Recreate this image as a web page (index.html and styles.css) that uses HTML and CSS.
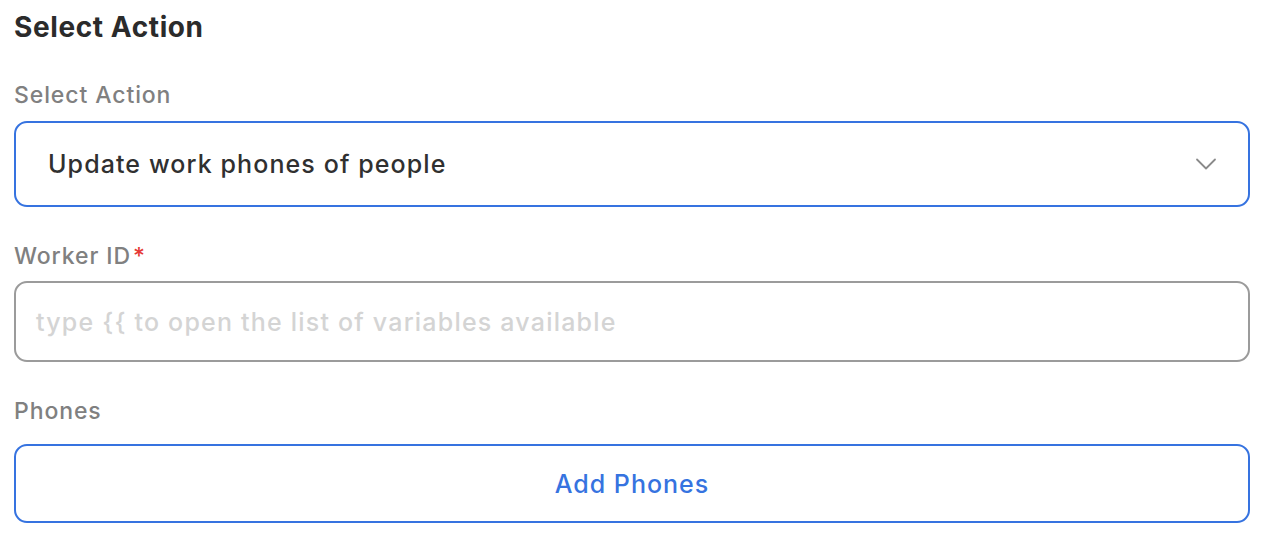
FILE: index.html
```html
<!DOCTYPE html>
<html lang="en">
<head>
<meta charset="utf-8">
<title>Select Action</title>
<link rel="stylesheet" href="styles.css">
</head>
<body>
<main class="panel">
  <h2 class="title">Select Action</h2>

  <label class="label label-first">Select Action</label>
  <div class="select">
    <span class="select-value">Update work phones of people</span>
    <svg class="chevron" width="22" height="12" viewBox="0 0 22 12" aria-hidden="true">
      <path d="M2 1.5 L11 10.5 L20 1.5" fill="none" stroke="#8a8a8a" stroke-width="1.8" stroke-linecap="round" stroke-linejoin="round"/>
    </svg>
  </div>

  <label class="label label-gap">Worker ID<span class="req">*</span></label>
  <div class="input">
    <span class="placeholder">type {{ to open the list of variables available</span>
  </div>

  <label class="label label-gap">Phones</label>
  <button class="add-btn" type="button">Add Phones</button>
</main>
</body>
</html>
```

FILE: styles.css
```css
html, body {
  margin: 0;
  padding: 0;
  background: #ffffff;
}

body {
  font-family: "Inter", "Open Sans", "Liberation Sans", sans-serif;
}

.panel {
  display: flex;
  flex-direction: column;
  padding: 0 20px 0 14px;
}

.title {
  margin: 0;
  font-size: 28px;
  line-height: 54px;
  font-weight: 700;
  letter-spacing: 0.6px;
  color: #2b2b2b;
}

.label {
  display: block;
  font-size: 23px;
  line-height: 32px;
  font-weight: 500;
  letter-spacing: 0.9px;
  color: #808080;
}

.label-first {
  margin-top: 25px;
}

.label-gap {
  margin-top: 33px;
}

.req {
  color: #e53935;
  margin-left: 2px;
}

.select {
  margin-top: 10px;
  height: 86px;
  box-sizing: border-box;
  border: 2px solid #3673e0;
  border-radius: 13px;
  display: flex;
  align-items: center;
  justify-content: space-between;
  padding: 0 31px 0 32px;
}

.select-value {
  font-size: 25px;
  font-weight: 500;
  letter-spacing: 1.1px;
  color: #303030;
}

.chevron {
  display: block;
}

.input {
  margin-top: 9px;
  height: 81px;
  box-sizing: border-box;
  border: 2px solid #9b9b9b;
  border-radius: 13px;
  display: flex;
  align-items: center;
  padding: 0 20px;
}

.placeholder {
  font-size: 25px;
  font-weight: 500;
  letter-spacing: 1.2px;
  color: #d4d4d4;
}

.add-btn {
  margin-top: 17px;
  height: 79px;
  box-sizing: border-box;
  border: 2px solid #3673e0;
  border-radius: 13px;
  background: #ffffff;
  font-family: inherit;
  font-size: 25px;
  font-weight: 500;
  letter-spacing: 1px;
  color: #3673e0;
  cursor: pointer;
}
```
